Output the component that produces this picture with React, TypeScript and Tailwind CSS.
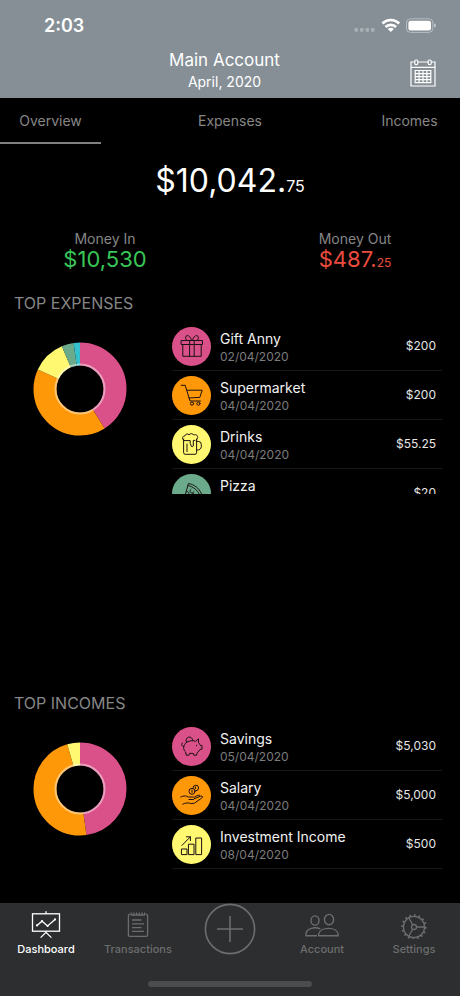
import type { ReactNode } from "react";

type IconProps = { children: ReactNode };

function CategoryGlyph({ children }: IconProps) {
  return (
    <svg
      viewBox="0 0 24 24"
      className="size-6"
      fill="none"
      stroke="#1c1014"
      strokeWidth="1"
      strokeLinecap="round"
      strokeLinejoin="round"
      aria-hidden="true"
    >
      {children}
    </svg>
  );
}

const GiftIcon = () => (
  <CategoryGlyph>
    <rect x="1.5" y="6.5" width="21" height="4" />
    <path d="M2.8 10.5V22.3H21.2V10.5M9.6 6.5V22.3M14.2 6.5V22.3" />
    <path d="M11.4 6.2C10.8 3.4 9 1.4 7.2 1.6C5.2 1.9 5 4.6 6.6 6.2M12.6 6.2C13.2 3.4 15 1.4 16.8 1.6C18.8 1.9 19 4.6 17.4 6.2" />
  </CategoryGlyph>
);

const CartIcon = () => (
  <CategoryGlyph>
    <path d="M1.2 2.3H5.2L10 18H20.4M7 7.2H22.2L19.8 14.4L9 15" />
    <circle cx="12" cy="20.6" r="1.6" />
    <circle cx="18.4" cy="20.6" r="1.6" />
  </CategoryGlyph>
);

const BeerIcon = () => (
  <CategoryGlyph>
    <path d="M3.6 7V20.6Q3.6 22.3 5.2 22.3H15Q16.6 22.3 16.6 20.6V7" />
    <path d="M3.6 8.2C1.6 7 2.4 3.8 4.8 4C5.2 1.8 8 1.4 9 2.8C10.4 1 13 1.4 13.6 3C16 1.8 18.6 4 17.4 6.4C17 7.2 16.8 7.2 16.6 8" />
    <path d="M3.6 8.6H10.2V11.4Q10.2 12.6 11 12.6V14Q12.3 15.4 13.3 14V8.4H15" />
    <path d="M16.6 9.4H18.2Q21.3 9.4 21.3 12.4V14.6Q21.3 18 16.6 18.2" />
    <path d="M7 12V19.6" />
  </CategoryGlyph>
);

const PizzaIcon = () => (
  <CategoryGlyph>
    <path d="M8.8 2.6C13.8 3.2 19 7 21.6 13L3.4 21.6ZM8.2 4.6C13 5.6 17.4 8.8 19.6 13.8" />
    <path d="M6.6 10.6C9.4 10 10 13.8 7 14.6M11 8.2A2 2 0 1 0 13.8 10.8" />
    <circle cx="13" cy="14.4" r="1.8" />
  </CategoryGlyph>
);

const PiggyIcon = () => (
  <CategoryGlyph>
    <path d="M6.2 8.6C8 6.7 13 6 15.6 7.4L18.5 4.8V8.6C19.6 9.6 20 10.6 20.4 11.6H22V15.3H20.2C19.4 16.9 18.4 17.9 17.2 18.6L16.6 21.2H13.8L13.3 19.4H9.6L9 21.2H6.2L5.7 18C2.7 15.8 3 11 6.2 8.6Z" />
    <path d="M3.6 12.5C1.2 12.2 1 9.6 2.6 8.8M6.4 8A3.4 3.4 0 1 1 12.8 6.6M16.6 11.2V11.8" />
  </CategoryGlyph>
);

const SalaryIcon = () => (
  <CategoryGlyph>
    <path d="M.8 14C3.6 12.6 5.8 12.4 8.2 14H13C15 14 15 16.5 13 16.5H9M14.4 15.6L20.6 13.2C22.6 12.6 23.4 14 21.8 15L14.4 20.2C10.6 21.6 8.4 18.7 4.6 20.4L2.8 21.2M15 13.5L18.6 12.2C19.8 11.8 20.2 12.6 19.6 13.3" />
    <circle cx="12" cy="8.3" r="3" />
    <path d="M13 5.2A2.8 2.8 0 1 1 15.6 7.8M12 7V9.4M15.4 3.9V5.6" />
  </CategoryGlyph>
);

const InvestmentIcon = () => (
  <CategoryGlyph>
    <rect x="1.8" y="17" width="5.2" height="5.6" />
    <rect x="8.8" y="12.2" width="5.2" height="10.4" />
    <rect x="16.2" y="6" width="5.4" height="16.6" />
    <path d="M2 13.4L10.4 4.8M6.4 4.8H10.4V8.6" />
  </CategoryGlyph>
);

type Entry = {
  name: string;
  date: string;
  amount: string;
  tint: string;
  icon: ReactNode;
};

type Slice = { color: string; from: number; to: number };

const expenses: Entry[] = [
  { name: "Gift Anny", date: "02/04/2020", amount: "$200", tint: "bg-[#da5189]", icon: <GiftIcon /> },
  { name: "Supermarket", date: "04/04/2020", amount: "$200", tint: "bg-[#ff9808]", icon: <CartIcon /> },
  { name: "Drinks", date: "04/04/2020", amount: "$55.25", tint: "bg-[#fff870]", icon: <BeerIcon /> },
  { name: "Pizza", date: "04/04/2020", amount: "$20", tint: "bg-[#6bab8c]", icon: <PizzaIcon /> },
];

const incomes: Entry[] = [
  { name: "Savings", date: "05/04/2020", amount: "$5,030", tint: "bg-[#da5189]", icon: <PiggyIcon /> },
  { name: "Salary", date: "04/04/2020", amount: "$5,000", tint: "bg-[#ff9808]", icon: <SalaryIcon /> },
  { name: "Investment Income", date: "08/04/2020", amount: "$500", tint: "bg-[#fff870]", icon: <InvestmentIcon /> },
];

const expenseSlices: Slice[] = [
  { color: "#da5189", from: 0, to: 148 },
  { color: "#ff9808", from: 148, to: 295 },
  { color: "#fff870", from: 295, to: 337 },
  { color: "#6bab8c", from: 337, to: 352 },
  { color: "#35c0cd", from: 352, to: 360 },
];

const incomeSlices: Slice[] = [
  { color: "#da5189", from: 0, to: 172 },
  { color: "#ff9808", from: 172, to: 344 },
  { color: "#fff870", from: 344, to: 360 },
];

function Donut({ slices, label }: { slices: Slice[]; label: string }) {
  return (
    <svg viewBox="0 0 94 94" className="size-[94px] shrink-0" role="img" aria-label={label}>
      <g transform="rotate(-90 47 47)" fill="none">
        {slices.map((s) => (
          <circle
            key={s.color}
            cx="47"
            cy="47"
            r="35"
            stroke={s.color}
            strokeWidth="23"
            pathLength={360}
            strokeDasharray={`${s.to - s.from} ${360 - s.to + s.from}`}
            strokeDashoffset={-s.from}
          />
        ))}
        <circle cx="47" cy="47" r="24.5" stroke="#fff" strokeOpacity="0.45" strokeWidth="2" />
      </g>
    </svg>
  );
}

function TopSection({
  title,
  slices,
  entries,
  className,
}: {
  title: string;
  slices: Slice[];
  entries: Entry[];
  className: string;
}) {
  return (
    <section className={className}>
      <h2 className="pl-3.5 text-base leading-6 text-[#868686]">{title}</h2>
      <div className="mt-[7px] flex items-start">
        <div className="mt-5 pr-[45px] pl-[33px]">
          <Donut slices={slices} label={title} />
        </div>
        <ul className="mr-[18px] max-h-[172px] flex-1 overflow-y-auto [scrollbar-width:none]">
          {entries.map((e) => (
            <li key={e.name} className="flex h-[49px] items-center border-b border-[#181818] pr-1.5">
              <span className={`flex size-[39px] shrink-0 items-center justify-center rounded-full ${e.tint}`}>
                {e.icon}
              </span>
              <div className="ml-[9px] flex-1 pt-1">
                <p className="text-sm leading-[18px] text-[#f2f2f2]">{e.name}</p>
                <p className="text-xs leading-[18px] text-[#7c7c7c]">{e.date}</p>
              </div>
              <span className="text-xs text-[#e6e6e6]">{e.amount}</span>
            </li>
          ))}
        </ul>
      </div>
    </section>
  );
}

function StatusBar() {
  return (
    <div className="flex h-12 items-center justify-between pt-1 pr-6 pl-11">
      <span className="text-lg font-semibold">2:03</span>
      <svg viewBox="0 0 82 16" className="h-4 w-[82px]" fill="#fff" aria-hidden="true">
        <g opacity="0.3">
          <rect x="0.5" y="10" width="3.5" height="3.8" rx="1" />
          <rect x="6" y="10" width="3.5" height="3.8" rx="1" />
          <rect x="11.5" y="10" width="3.5" height="3.8" rx="1" />
          <rect x="17" y="10" width="3.5" height="3.8" rx="1" />
        </g>
        <g fill="none" stroke="#fff" strokeWidth="2.6">
          <path d="M28.4 5.5A12 12 0 0 1 45.2 5.5" />
          <path d="M31.5 9A7.6 7.6 0 0 1 42.1 9" />
        </g>
        <path d="M36.8 14L33.7 11Q36.8 8.6 39.9 11Z" />
        <rect x="52.5" y="0.8" width="26.4" height="13.6" rx="4" fill="none" stroke="#fff" strokeOpacity="0.4" />
        <rect x="54.4" y="2.7" width="22.6" height="9.8" rx="2.3" />
        <path d="M80 5.4Q82 6 82 7.5T80 9.6Z" opacity="0.5" />
      </svg>
    </div>
  );
}

function CalendarIcon() {
  return (
    <svg viewBox="0 0 26 28" className="h-7 w-[26px]" fill="none" stroke="#fff" strokeWidth="1.2" aria-hidden="true">
      <path d="M4.6 3H1V27H25V3H21.4M7.8 3H18.2M1 8.4H25" />
      <rect x="4.8" y="1" width="3" height="4.6" rx="1.2" />
      <rect x="18.2" y="1" width="3" height="4.6" rx="1.2" />
      <path d="M5.2 11.5H20.8V23.7H5.2ZM9.1 11.5V23.7M13 11.5V23.7M16.9 11.5V23.7M5.2 14.6H20.8M5.2 17.6H20.8M5.2 20.7H20.8" />
    </svg>
  );
}

const DashboardIcon = () => (
  <svg viewBox="0 0 30 28" className="h-7 w-[30px]" fill="none" stroke="currentColor" strokeWidth="1.3" aria-hidden="true">
    <rect x="1.5" y="2.8" width="27" height="17.4" />
    <path d="M15 .2V2.8M15 20.2V22M9.6 26.6L15 21.4L20.4 26.6" />
    <path d="M6 14.4L11 10.2L16.6 15L24 8.4" />
    <g fill="currentColor" stroke="none">
      <circle cx="6" cy="14.4" r="1.1" />
      <circle cx="11" cy="10.2" r="1.1" />
      <circle cx="16.6" cy="15" r="1.1" />
      <circle cx="24" cy="8.4" r="1.1" />
    </g>
  </svg>
);

const TransactionsIcon = () => (
  <svg viewBox="0 0 22 28" className="h-7 w-[22px]" fill="none" stroke="currentColor" strokeWidth="1.3" aria-hidden="true">
    <path d="M3 3.4H2.4Q1.4 3.4 1.4 4.6V24Q1.4 25.4 2.8 25.4H19.2Q20.6 25.4 20.6 24V4.6Q20.6 3.4 19.6 3.4H19" />
    <path d="M4.2 1.6V4.6M6.9 1.6V4.6M9.6 1.6V4.6M12.3 1.6V4.6M15 1.6V4.6M17.7 1.6V4.6M4.2 4H17.7" />
    <path d="M5 9H14.5M5 12.8H17M5 16.6H14.5M5 20.4H17" />
  </svg>
);

const AccountIcon = () => (
  <svg viewBox="0 0 34 28" className="h-7 w-[34px]" fill="none" stroke="currentColor" strokeWidth="1.4" aria-hidden="true">
    <ellipse cx="10" cy="9.5" rx="4" ry="4.6" />
    <ellipse cx="24" cy="8.6" rx="4.6" ry="5.2" />
    <path d="M12 24.8H1V22.6C1.8 17.6 9.5 15.2 15.4 17.9" />
    <path d="M13.6 24.8V23.2C15 15.4 32 15.4 33.2 23.2V24.8Z" />
  </svg>
);

const SettingsIcon = () => (
  <svg viewBox="0 0 28 28" className="size-7" fill="none" stroke="currentColor" strokeWidth="1.3" aria-hidden="true">
    <circle cx="14" cy="16" r="10.6" />
    <circle cx="14" cy="16" r="11.8" strokeWidth="2" pathLength={64} strokeDasharray="1.4 2.6" />
    <circle cx="14" cy="16" r="2.5" />
    <path d="M16.5 16H24.6M12.7 13.8L8.7 6.8M12.7 18.2L8.7 25.2" />
  </svg>
);

function TabItem({ label, icon, active = false }: { label: string; icon: ReactNode; active?: boolean }) {
  return (
    <button
      type="button"
      className={`flex flex-col items-center pt-2 ${active ? "text-white" : "text-[#6c6d6e]"}`}
      aria-current={active ? "page" : undefined}
    >
      {icon}
      <span className="mt-[3px] text-[11px] leading-[14px] font-medium">{label}</span>
    </button>
  );
}

export default function App() {
  return (
    <div className="flex min-h-screen flex-col bg-black font-['Inter',sans-serif] text-white">
      <header className="bg-[#868f96] pb-1.5">
        <StatusBar />
        <div className="flex items-start pr-6 pl-[39px]">
          <div className="flex-1 text-center">
            <h1 className="text-[17px] leading-6">Main Account</h1>
            <p className="text-sm leading-5">April, 2020</p>
          </div>
          <button type="button" aria-label="Choose month" className="mt-[11px] -mb-2">
            <CalendarIcon />
          </button>
        </div>
      </header>

      <nav className="flex h-[46px] justify-between text-sm text-[#868686]">
        <button type="button" className="w-[101px] border-b-2 border-[#808080] pt-0.5">
          Overview
        </button>
        <button type="button" className="w-[101px] border-b-2 border-transparent pt-0.5">
          Expenses
        </button>
        <button type="button" className="w-[101px] border-b-2 border-transparent pt-0.5">
          Incomes
        </button>
      </nav>

      <main className="flex flex-1 flex-col">
        <p className="pt-[17px] text-center text-[32px] leading-10">
          $10,042.<span className="text-base leading-4">75</span>
        </p>
        <dl className="mt-7 grid grid-cols-2 gap-10 text-center">
          <div>
            <dt className="text-sm leading-5 text-[#868686]">Money In</dt>
            <dd className="text-[22px] leading-5 text-[#38c658]">$10,530</dd>
          </div>
          <div>
            <dt className="text-sm leading-5 text-[#868686]">Money Out</dt>
            <dd className="text-[22px] leading-5 text-[#ea4c3e]">
              $487.<span className="text-xs leading-3">25</span>
            </dd>
          </div>
        </dl>
        <TopSection title="TOP EXPENSES" slices={expenseSlices} entries={expenses} className="mt-[22px] flex-1" />
        <TopSection title="TOP INCOMES" slices={incomeSlices} entries={incomes} className="pb-[34px]" />
      </main>

      <footer className="bg-[#2c2e2f] pb-[9px]">
        <nav className="grid h-[69px] grid-cols-5 items-start">
          <TabItem label="Dashboard" icon={<DashboardIcon />} active />
          <TabItem label="Transactions" icon={<TransactionsIcon />} />
          <button type="button" aria-label="Add" className="flex justify-center text-[#6c6d6e]">
            <svg viewBox="0 0 52 52" className="size-[52px]" fill="none" stroke="currentColor" strokeWidth="1.6" aria-hidden="true">
              <circle cx="26" cy="26" r="24.6" />
              <path d="M26 13V39M13 26H39" />
            </svg>
          </button>
          <TabItem label="Account" icon={<AccountIcon />} />
          <TabItem label="Settings" icon={<SettingsIcon />} />
        </nav>
        <div className="mx-auto mt-[9px] h-1.5 w-[164px] rounded-full bg-[#4b4c4d]" />
      </footer>
    </div>
  );
}
